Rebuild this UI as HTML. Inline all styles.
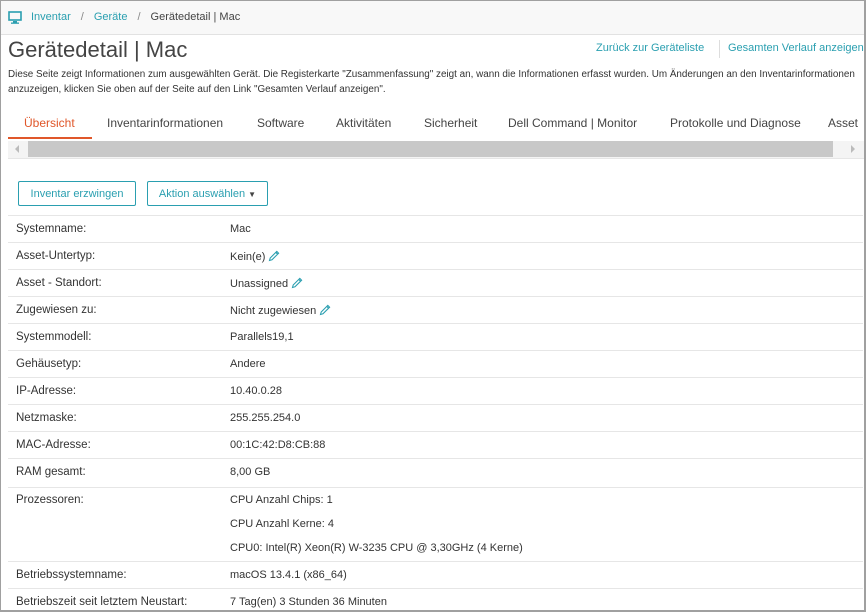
<!DOCTYPE html>
<html><head><meta charset="utf-8">
<style>
*{box-sizing:border-box;margin:0;padding:0}
html,body{width:866px;height:612px;overflow:hidden;background:#fff}
body{font-family:"Liberation Sans",sans-serif;color:#333;position:relative;font-size:12px}
.frame{position:absolute;left:0;top:0;width:866px;height:612px;border:1px solid #a0a0a0;border-right:2px solid #a0a0a0;border-bottom:2px solid #a0a0a0;pointer-events:none;z-index:9}
.top{position:absolute;left:0;top:0;width:866px;height:35px;background:#f8f8f8;border-bottom:1px solid #e2e2e2}
.bc{position:absolute;left:31px;top:11px;font-size:11px;color:#2a9fb0}
.bc .sep{color:#888;margin:0 10px}
.bc .cur{color:#444}
.a{position:absolute;white-space:nowrap}
h1{position:absolute;left:8px;top:37px;font-weight:normal;font-size:22px;color:#444}
.desc{position:absolute;left:8px;top:67px;font-size:9.9px;color:#333;line-height:15px;width:858px}
.tabs{position:absolute;top:116px;font-size:12px;color:#444}
.link{color:#2a9fb0;font-size:11px}
.btn{position:absolute;top:181px;height:25px;border:1px solid #2a9fb0;border-radius:2px;color:#2a9fb0;font-size:11px;text-align:center;line-height:25px}
.row{position:absolute;left:8px;width:855px;border-top:1px solid #e6e6e6}
.lab{position:absolute;left:16px;font-size:11.5px}
.val{position:absolute;left:230px;font-size:11px}
.pen{display:inline-block;vertical-align:-2px;margin-left:3px}
</style></head><body>
<div class="top"></div>
<svg class="a" style="left:8px;top:11px" width="14" height="13" viewBox="0 0 14 13"><rect x="1" y="1" width="12" height="8" fill="none" stroke="#2a9fb0" stroke-width="1.6"/><rect x="5" y="10" width="4" height="2" fill="#2a9fb0"/><rect x="3" y="11.5" width="8" height="1.3" fill="#2a9fb0"/></svg>
<div class="bc">Inventar<span class="sep">/</span>Geräte<span class="sep">/</span><span class="cur">Gerätedetail | Mac</span></div>
<h1>Gerätedetail | Mac</h1>
<div class="a link" style="left:596px;top:42px">Zurück zur Geräteliste</div>
<div class="a" style="left:719px;top:40px;width:1px;height:18px;background:#ddd"></div>
<div class="a link" style="left:728px;top:42px">Gesamten Verlauf anzeigen</div>
<div class="desc">Diese Seite zeigt Informationen zum ausgewählten Gerät. Die Registerkarte "Zusammenfassung" zeigt an, wann die Informationen erfasst wurden. Um Änderungen an den Inventarinformationen anzuzeigen, klicken Sie oben auf der Seite auf den Link "Gesamten Verlauf anzeigen".</div>
<div class="tabs" style="left:24px;color:#e0572a">Übersicht</div>
<div class="a" style="left:8px;top:137px;width:84px;height:2px;background:#e0572a"></div>
<div class="tabs" style="left:107px">Inventarinformationen</div>
<div class="tabs" style="left:257px">Software</div>
<div class="tabs" style="left:336px">Aktivitäten</div>
<div class="tabs" style="left:424px">Sicherheit</div>
<div class="tabs" style="left:508px">Dell Command | Monitor</div>
<div class="tabs" style="left:670px">Protokolle und Diagnose</div>
<div class="tabs" style="left:828px">Asset</div>
<div class="a" style="left:8px;top:141px;width:856px;height:17px;background:#f4f4f4"></div>
<div class="a" style="left:28px;top:141px;width:805px;height:16px;background:#c8c8c8"></div>
<div class="a" style="left:15px;top:145px;width:0;height:0;border-top:4px solid transparent;border-bottom:4px solid transparent;border-right:4px solid #bbb"></div>
<div class="a" style="left:851px;top:145px;width:0;height:0;border-top:4px solid transparent;border-bottom:4px solid transparent;border-left:4px solid #bbb"></div>
<div class="a" style="left:8px;top:158px;width:856px;height:1px;background:#e6e6e6"></div>
<div class="btn" style="left:18px;width:118px">Inventar erzwingen</div>
<div class="btn" style="left:147px;width:121px">Aktion auswählen <span style="font-size:8px;color:#444">▼</span></div>

<div class="row" style="top:215px"></div>
<div class="row" style="top:242px"></div>
<div class="row" style="top:269px"></div>
<div class="row" style="top:296px"></div>
<div class="row" style="top:323px"></div>
<div class="row" style="top:350px"></div>
<div class="row" style="top:377px"></div>
<div class="row" style="top:404px"></div>
<div class="row" style="top:431px"></div>
<div class="row" style="top:458px"></div>
<div class="row" style="top:487px"></div>
<div class="row" style="top:561px"></div>
<div class="row" style="top:588px"></div>

<div class="lab a" style="top:223px">Systemname:</div><div class="val a" style="top:223px">Mac</div>
<div class="lab a" style="top:250px">Asset-Untertyp:</div><div class="val a" style="top:250px">Kein(e)<svg class="pen" width="12" height="12" viewBox="0 0 12 12"><path d="M1.5 10.5 L2.2 8 L8.8 1.4 L10.6 3.2 L4 9.8 Z M7.8 2.4 L9.6 4.2" fill="none" stroke="#2a9fb0" stroke-width="1.1"/></svg></div>
<div class="lab a" style="top:277px">Asset - Standort:</div><div class="val a" style="top:277px">Unassigned<svg class="pen" width="12" height="12" viewBox="0 0 12 12"><path d="M1.5 10.5 L2.2 8 L8.8 1.4 L10.6 3.2 L4 9.8 Z M7.8 2.4 L9.6 4.2" fill="none" stroke="#2a9fb0" stroke-width="1.1"/></svg></div>
<div class="lab a" style="top:304px">Zugewiesen zu:</div><div class="val a" style="top:304px">Nicht zugewiesen<svg class="pen" width="12" height="12" viewBox="0 0 12 12"><path d="M1.5 10.5 L2.2 8 L8.8 1.4 L10.6 3.2 L4 9.8 Z M7.8 2.4 L9.6 4.2" fill="none" stroke="#2a9fb0" stroke-width="1.1"/></svg></div>
<div class="lab a" style="top:331px">Systemmodell:</div><div class="val a" style="top:331px">Parallels19,1</div>
<div class="lab a" style="top:358px">Gehäusetyp:</div><div class="val a" style="top:358px">Andere</div>
<div class="lab a" style="top:385px">IP-Adresse:</div><div class="val a" style="top:385px">10.40.0.28</div>
<div class="lab a" style="top:412px">Netzmaske:</div><div class="val a" style="top:412px">255.255.254.0</div>
<div class="lab a" style="top:439px">MAC-Adresse:</div><div class="val a" style="top:439px">00:1C:42:D8:CB:88</div>
<div class="lab a" style="top:466px">RAM gesamt:</div><div class="val a" style="top:466px">8,00 GB</div>
<div class="lab a" style="top:494px">Prozessoren:</div>
<div class="val a" style="top:494px">CPU Anzahl Chips: 1</div>
<div class="val a" style="top:518px">CPU Anzahl Kerne: 4</div>
<div class="val a" style="top:542px">CPU0: Intel(R) Xeon(R) W-3235 CPU @ 3,30GHz (4 Kerne)</div>
<div class="lab a" style="top:569px">Betriebssystemname:</div><div class="val a" style="top:569px">macOS 13.4.1 (x86_64)</div>
<div class="lab a" style="top:596px">Betriebszeit seit letztem Neustart:</div><div class="val a" style="top:596px">7 Tag(en) 3 Stunden 36 Minuten</div>
<div class="frame"></div>
</body></html>
